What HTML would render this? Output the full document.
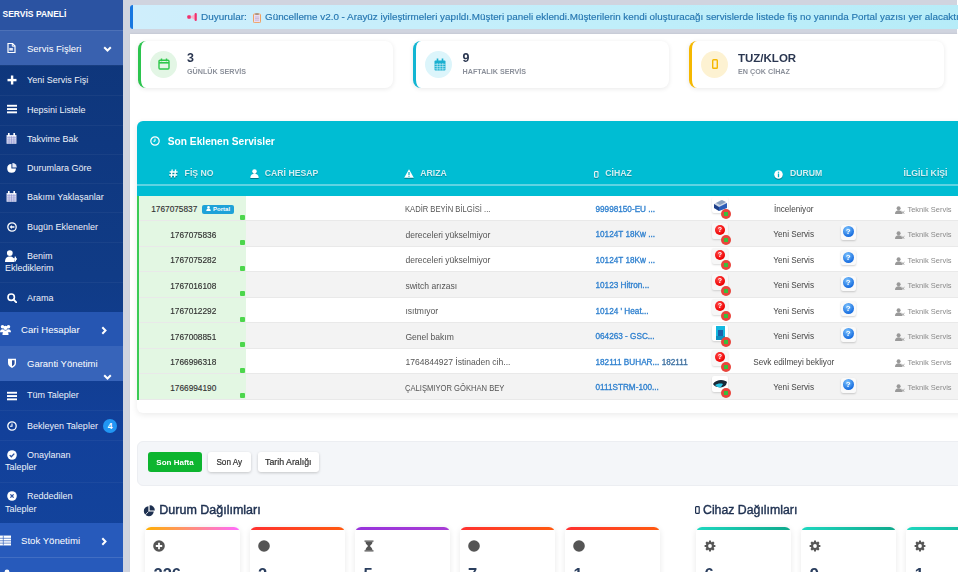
<!DOCTYPE html>
<html><head><meta charset="utf-8">
<style>
*{box-sizing:border-box}
html,body{margin:0;padding:0}
body{width:958px;height:572px;overflow:hidden;position:relative;background:#fff;font-family:"Liberation Sans",sans-serif}
.abs{position:absolute}
#sb{position:absolute;left:0;top:0;width:123.2px;height:572px;background:linear-gradient(180deg,#0e3578 0%,#0f3880 25%,#103b86 48%,#12409a 75%,#13449c 100%);color:#fff;overflow:hidden}
.sh{position:absolute;left:0;width:123.2px}
.si{position:absolute;left:0;width:123.2px;border-top:1px solid rgba(255,255,255,0.045)}
.si .ic{position:absolute;left:6px;width:11px;height:11px}
.si .tx{position:absolute;margin-top:-1px;left:27px;font-size:9px;line-height:12px;color:#eef2fa;white-space:nowrap}
.tx2{position:absolute;margin-top:-1px;left:5px;font-size:9px;line-height:12.8px;color:#eef2fa;white-space:nowrap}
.main{position:absolute;left:123.2px;top:0;width:834px;height:34px;background:#d0d4df}
.strip{position:absolute;left:123.2px;top:0;width:6.8px;height:572px;background:#d0d4df}

.alert{position:absolute;left:130px;top:4.9px;width:840px;height:24.5px;background:linear-gradient(90deg,#cfeefc,#bfeefa 60%,#b6ecf8);border-left:3px solid #1877e0;border-radius:3px 0 0 3px}
.alert .t{position:absolute;left:51px;top:5.5px;font-size:9.93px;line-height:13px;color:#2576b0;white-space:nowrap;-webkit-text-stroke:0.15px #2576b0}
.content{position:absolute;left:130px;top:33.5px;width:828px;height:539px;background:#fff;box-shadow:0 -1.5px 1.5px rgba(0,0,0,0.06)}
.sc{position:absolute;top:41px;height:46.5px;width:255.5px;background:#fff;border-left:3px solid #27c24c;border-radius:8px;box-shadow:0 1px 5px rgba(0,0,0,0.09)}
.sc .circ{position:absolute;top:9.5px;width:27px;height:27px;border-radius:50%}
.sc .num{position:absolute;left:46.5px;top:10px;font-size:12.5px;line-height:14px;font-weight:bold;color:#2a3650}
.sc .lab{position:absolute;left:46.5px;top:25.6px;font-size:7.2px;line-height:9px;font-weight:bold;color:#8c919b;letter-spacing:0;white-space:nowrap}
.tcard{position:absolute;left:137.2px;top:121.2px;width:840px;height:292.1px;background:#fff;border-radius:6px 0 0 6px;box-shadow:0 2px 6px rgba(0,0,0,0.08);overflow:hidden}
.thead{position:absolute;left:0;top:0;width:100%;height:74.4px;background:#00bdd3}
.ttl{position:absolute;left:30.6px;top:13.7px;font-size:10.2px;line-height:14px;font-weight:bold;color:#fff;white-space:nowrap}
.th{position:absolute;top:47px;font-size:8.7px;line-height:10px;font-weight:bold;color:#d3eff3;letter-spacing:0;white-space:nowrap;text-shadow:0 1px 1px rgba(0,0,0,0.25)}
.hline{position:absolute;left:0;top:62.9px;width:100%;height:1.5px;background:#5fd3e2}
.row{position:absolute;left:0;width:100%;height:25.5px;border-bottom:1px solid #e9e9e9}
.row.g{background:#f3f3f3}
.c1{position:absolute;left:2.1px;top:0;width:107.2px;height:100%;background:#e3f7e3}
.gb{position:absolute;left:0;top:0;width:2.2px;height:calc(100% + 1px);background:#3acb55}
.sq{position:absolute;left:100.8px;top:19.4px;width:5px;height:5px;background:#4cd64c;border-radius:1px}
.fn{position:absolute;top:8.8px;font-size:8.3px;line-height:10px;color:#333;-webkit-text-stroke:0.15px #333;white-space:nowrap}
.ar{position:absolute;left:268.2px;top:9.3px;font-size:7.6px;line-height:10px;color:#555;white-space:nowrap}
.cz{position:absolute;left:458.3px;top:9.1px;font-size:8.2px;line-height:10px;color:#2f80cf;-webkit-text-stroke:0.3px #2f80cf;white-space:nowrap}
.du{position:absolute;left:606.5px;width:100px;text-align:center;top:9.1px;font-size:8.2px;line-height:10px;color:#444;white-space:nowrap}
.ks{position:absolute;left:770.2px;top:9.3px;font-size:7.5px;line-height:10px;color:#8b8b8b;white-space:nowrap}
.thumb{position:absolute;left:575.3px;top:1.8px;width:16px;height:16px;border-radius:2px;background:#f7f7f7;box-shadow:0 1px 2px rgba(0,0,0,0.15);overflow:hidden}
.rb{position:absolute;left:584.2px;top:13.5px;width:10px;height:10px;border-radius:50%;background:#e8453c}
.rb:after{content:"";position:absolute;left:3px;top:3px;width:4px;height:4px;background:#3cbd3c}
.qb{position:absolute;left:703.5px;top:3.5px;width:15px;height:15px;background:#fafafa;border-radius:2px;box-shadow:0 1px 2px rgba(0,0,0,0.18)}
.qb i{position:absolute;left:2px;top:1.5px;width:11px;height:11px;border-radius:50%;background:radial-gradient(circle at 40% 30%,#7cc4ff,#1a6fe0 70%);color:#fff;font-style:normal;font-size:8px;line-height:11px;text-align:center;font-weight:bold}
.filt{position:absolute;left:136.5px;top:440.8px;width:840px;height:45px;background:#f4f6f9;border:1px solid #eceef2;border-radius:6px}
.btn{position:absolute;top:451.6px;height:20.2px;border-radius:3px;font-size:8px;line-height:21px;text-align:center;white-space:nowrap}
.h2{position:absolute;font-size:12.5px;line-height:15px;color:#1e3050;white-space:nowrap}
.mc{position:absolute;top:527px;width:95px;height:60px;background:#fff;border-radius:6px 6px 0 0;box-shadow:0 1px 6px rgba(0,0,0,0.09);overflow:hidden}
.mc .bar{position:absolute;left:0;top:0;width:100%;height:3px}
.mc .n{position:absolute;left:8.5px;top:36.5px;font-size:16.5px;line-height:20px;font-weight:bold;color:#2a3e5e}
.rq{position:absolute;left:2.5px;top:2px;width:10px;height:10px;border-radius:50%;background:radial-gradient(circle at 40% 35%,#ff4a4a,#e00 70%);color:#fff;font-size:7px;line-height:10px;text-align:center;font-weight:bold}

</style></head>
<body>
<div id="wrap" style="position:absolute;left:0;top:0;width:958px;height:572px;overflow:hidden;filter:blur(0.3px)">
<div id="sb">
  <div class="sh" style="top:0;height:29.5px;background:#2b53a2">
    <div class="abs" style="left:2.5px;top:8px;font-size:8.5px;line-height:12px;font-weight:bold;color:#fff">SERVİS PANELİ</div>
  </div>
  <div class="sh" style="top:29.5px;height:35.5px;background:#3961af;border-top:1px solid rgba(255,255,255,0.1)">
    <div class="abs" style="left:27px;top:11px;font-size:9.5px;line-height:13px;color:#fff">Servis Fişleri</div>
  </div>
  <div class="si" style="top:65px;height:30px"><div class="tx" style="top:9px">Yeni Servis Fişi</div></div>
  <div class="si" style="top:95px;height:29.5px"><div class="tx" style="top:8.5px">Hepsini Listele</div></div>
  <div class="si" style="top:124.5px;height:29px"><div class="tx" style="top:8px">Takvime Bak</div></div>
  <div class="si" style="top:153.5px;height:29px"><div class="tx" style="top:8.5px">Durumlara Göre</div></div>
  <div class="si" style="top:182.5px;height:29.5px"><div class="tx" style="top:8.5px">Bakımı Yaklaşanlar</div></div>
  <div class="si" style="top:212px;height:29.5px"><div class="tx" style="top:8.5px">Bugün Eklenenler</div></div>
  <div class="si" style="top:241.5px;height:40px"><div class="tx" style="top:8.5px">Benim</div><div class="tx2" style="top:20.5px">Eklediklerim</div></div>
  <div class="si" style="top:281.5px;height:30.5px"><div class="tx" style="top:10px">Arama</div></div>
  <div class="sh" style="top:312px;height:33.5px;background:#2656b2">
    <div class="abs" style="left:21px;top:11px;font-size:9.6px;line-height:13px;color:#fff">Cari Hesaplar</div>
  </div>
  <div class="sh" style="top:345.5px;height:35.5px;background:#3764ba">
    <div class="abs" style="left:27px;top:11px;font-size:9.5px;line-height:13px;color:#fff">Garanti Yönetimi</div>
  </div>
  <div class="si" style="top:381px;height:29px;border-top:none"><div class="tx" style="top:9px">Tüm Talepler</div></div>
  <div class="si" style="top:410px;height:30px"><div class="tx" style="top:9.5px">Bekleyen Talepler</div></div>
  <div class="si" style="top:440px;height:42px"><div class="tx" style="top:8.5px">Onaylanan</div><div class="tx2" style="top:21px">Talepler</div></div>
  <div class="si" style="top:482px;height:41px"><div class="tx" style="top:8px">Reddedilen</div><div class="tx2" style="top:21px">Talepler</div></div>
  <div class="sh" style="top:523px;height:34px;background:#275abb">
    <div class="abs" style="left:21px;top:11px;font-size:9.6px;line-height:13px;color:#fff">Stok Yönetimi</div>
  </div>
  <div class="sh" style="top:557px;height:30px;background:#275abb;border-top:1px solid rgba(255,255,255,0.12)">
    <div class="abs" style="left:21px;top:12px;font-size:9.6px;line-height:13px;color:#fff">Personel İşlemleri</div>
  </div>
  <svg width="10" height="10" viewBox="0 0 10 10" style="position:absolute;left:6px;top:42.5px"><path d="M2 0.5h4.5l2.5 2.5v6.5h-7z" fill="none" stroke="#fff" stroke-width="1.2"/><path d="M6.3 0.6v2.6h2.6" fill="none" stroke="#fff" stroke-width="1"/><rect x="3.3" y="5" width="3.6" height="2.6" fill="#dfe6f6"/></svg>
  <svg width="10" height="10" viewBox="0 0 10 10" style="position:absolute;left:6.5px;top:75px"><rect x="3.9" y="0.5" width="2.4" height="9" fill="#fff"/><rect x="0.5" y="3.9" width="9" height="2.4" fill="#fff"/></svg>
  <svg width="10" height="10" viewBox="0 0 10 10" style="position:absolute;left:6.5px;top:104px"><rect x="0" y="0.8" width="10" height="1.9" fill="#fff"/><rect x="0" y="4.1" width="10" height="1.9" fill="#fff"/><rect x="0" y="7.4" width="10" height="1.9" fill="#fff"/></svg>
  <svg width="11" height="11" viewBox="0 0 10 10" style="position:absolute;left:6px;top:132.5px"><rect x="0.5" y="1.8" width="9" height="8" fill="#dfe3f3"/><rect x="1.8" y="0" width="1.5" height="2.8" fill="#fff"/><rect x="6.7" y="0" width="1.5" height="2.8" fill="#fff"/><path d="M0.5 4.3h9M0.5 6.3h9M0.5 8.2h9M2.8 3v7M5 3v7M7.2 3v7" stroke="#8d8fd0" stroke-width="0.55"/></svg>
  <svg width="10" height="10" viewBox="0 0 10 10" style="position:absolute;left:6.5px;top:162.5px"><path d="M4.4 1A4.4 4.4 0 1 0 9 5.6H4.4z" fill="#fff"/><path d="M5.4 0A4.4 4.4 0 0 1 9.8 4.5H5.4z" fill="#e6eaf7"/></svg>
  <svg width="11" height="11" viewBox="0 0 10 10" style="position:absolute;left:6px;top:190.5px"><rect x="0.5" y="1.8" width="9" height="8" fill="#dfe3f3"/><rect x="1.8" y="0" width="1.5" height="2.8" fill="#fff"/><rect x="6.7" y="0" width="1.5" height="2.8" fill="#fff"/><path d="M0.5 4.3h9M0.5 6.3h9M0.5 8.2h9M2.8 3v7M5 3v7M7.2 3v7" stroke="#8d8fd0" stroke-width="0.55"/></svg>
  <svg width="10" height="10" viewBox="0 0 10 10" style="position:absolute;left:6.5px;top:221.5px"><circle cx="5" cy="5" r="4.2" fill="none" stroke="#fff" stroke-width="1.3"/><path d="M2.6 5l2.2-2v1.3h2.6v1.4H4.8V7z" fill="#fff"/></svg>
  <svg width="12" height="12" viewBox="0 0 10 10" style="position:absolute;left:4.5px;top:249.5px"><circle cx="4" cy="2.6" r="2.4" fill="#fff"/><path d="M0 10c0-3.2 1.6-4.6 4-4.6s4 1.4 4 4.6z" fill="#fff"/><rect x="8" y="5.5" width="1.2" height="4" fill="#fff"/><rect x="6.6" y="6.9" width="4" height="1.2" fill="#fff"/></svg>
  <svg width="10" height="10" viewBox="0 0 10 10" style="position:absolute;left:7px;top:293px"><circle cx="4.2" cy="4.2" r="3.2" fill="none" stroke="#fff" stroke-width="1.6"/><path d="M6.6 6.6L9.4 9.4" stroke="#fff" stroke-width="1.9" stroke-linecap="round"/></svg>
  <svg width="11" height="11" viewBox="0 0 10 10" style="position:absolute;left:0px;top:323.5px"><circle cx="2.3" cy="2.4" r="1.6" fill="#fff"/><circle cx="7.7" cy="2.4" r="1.6" fill="#fff"/><circle cx="5" cy="3.6" r="1.9" fill="#fff"/><path d="M0 7.5c0-2 1-2.8 2.3-2.8s2.3.8 2.3 2.8zM5.4 7.5c0-2 1-2.8 2.3-2.8S10 5.5 10 7.5z" fill="#fff"/><path d="M2.2 10c0-2.8 1.2-4.2 2.8-4.2s2.8 1.4 2.8 4.2z" fill="#fff"/></svg>
  <svg width="10" height="10" viewBox="0 0 10 10" style="position:absolute;left:6.5px;top:358px"><path d="M1 0.8h8v4.2c0 2.6-1.8 4-4 4.9C2.8 9 1 7.6 1 5z" fill="#fff"/><path d="M5 2.2h2.6v2.9c0 1.5-1 2.5-2.6 3.2z" fill="#2a4f9d"/></svg>
  <svg width="10" height="10" viewBox="0 0 10 10" style="position:absolute;left:7px;top:391px"><rect x="0" y="0.8" width="10" height="1.9" fill="#fff"/><rect x="0" y="4.1" width="10" height="1.9" fill="#fff"/><rect x="0" y="7.4" width="10" height="1.9" fill="#fff"/></svg>
  <svg width="10" height="10" viewBox="0 0 10 10" style="position:absolute;left:7px;top:420.5px"><circle cx="5" cy="5" r="4.2" fill="none" stroke="#fff" stroke-width="1.3"/><path d="M5 2.4V5.3H3" fill="none" stroke="#fff" stroke-width="1.1"/></svg>
  <svg width="10" height="10" viewBox="0 0 10 10" style="position:absolute;left:6.6px;top:450px"><circle cx="5" cy="5" r="4.8" fill="#fff"/><path d="M2.7 5.1l1.6 1.6 3-3.1" fill="none" stroke="#2a4f9d" stroke-width="1.3"/></svg>
  <svg width="10" height="10" viewBox="0 0 10 10" style="position:absolute;left:6.6px;top:491px"><circle cx="5" cy="5" r="4.8" fill="#fff"/><path d="M3.4 3.4l3.2 3.2M6.6 3.4L3.4 6.6" stroke="#2a4f9d" stroke-width="1.3"/></svg>
  <svg width="11" height="11" viewBox="0 0 10 10" style="position:absolute;left:0px;top:534.5px"><rect x="0" y="0.5" width="10" height="9" fill="#fff"/><path d="M0 3h10M0 5.2h10M0 7.4h10M3 0.5v9" stroke="#2b5bbb" stroke-width="0.6"/></svg>
  <svg width="10" height="10" viewBox="0 0 10 10" style="position:absolute;left:2px;top:569px"><circle cx="5" cy="2.8" r="2.4" fill="#fff"/><path d="M0.8 10c0-3.2 1.8-4.8 4.2-4.8s4.2 1.6 4.2 4.8z" fill="#fff"/></svg>
  <svg width="9" height="6" viewBox="0 0 9 6" style="position:absolute;left:103px;top:45.5px"><path d="M1.2 1.3l3.3 3.2 3.3-3.2" fill="none" stroke="#fff" stroke-width="2"/></svg>
  <svg width="6" height="9" viewBox="0 0 6 9" style="position:absolute;left:100.5px;top:325.5px"><path d="M1.3 1.2l3.2 3.3-3.2 3.3" fill="none" stroke="#fff" stroke-width="2"/></svg>
  <svg width="9" height="6" viewBox="0 0 9 6" style="position:absolute;left:103px;top:374px"><path d="M1.2 1.3l3.3 3.2 3.3-3.2" fill="none" stroke="#fff" stroke-width="2"/></svg>
  <svg width="6" height="9" viewBox="0 0 6 9" style="position:absolute;left:100.5px;top:536.5px"><path d="M1.3 1.2l3.2 3.3-3.2 3.3" fill="none" stroke="#fff" stroke-width="2"/></svg>
  <div class="abs" style="left:103px;top:418.8px;width:14px;height:14px;border-radius:50%;background:#2196f3;color:#fff;font-size:8.5px;line-height:14px;text-align:center;font-weight:bold">4</div>
</div>
<div class="main"></div>
<div class="strip"></div>

<div class="content"></div>
<div class="alert"><div class="t" style="left:68px">Duyurular:</div><div class="t" style="left:132px;font-size:9.85px">Güncelleme v2.0 - Arayüz iyileştirmeleri yapıldı.Müşteri paneli eklendi.Müşterilerin kendi oluşturacağı servislerde listede fiş no yanında Portal yazısı yer alacaktır.</div>
<svg width="10" height="8" viewBox="0 0 10 8" style="position:absolute;left:54px;top:8.2px"><rect x="0.3" y="2.2" width="3.6" height="3.6" rx="1" fill="#f0306e"/><path d="M3.8 3.2L8 1.2v5.6L3.8 4.8z" fill="#f7b6cc"/><rect x="7.6" y="0" width="2.2" height="8" rx="1" fill="#f0306e"/></svg>
<svg width="8" height="10" viewBox="0 0 8 10" style="position:absolute;left:119.8px;top:7.7px"><rect x="0.5" y="1" width="7" height="8.6" rx="0.8" fill="#e9ddf0" stroke="#f0a060" stroke-width="1"/><rect x="2.3" y="0.2" width="3.4" height="1.8" fill="#a89080"/><path d="M2 4h4M2 5.6h4M2 7.2h4" stroke="#b8a0c8" stroke-width="0.6"/></svg></div>

<div class="sc" style="left:137.5px;border-left-color:#2bc44e"><div class="circ" style="left:9.2px;background:#e3f6e5"></div><svg width="12" height="12" viewBox="0 0 12 12" style="position:absolute;left:17.7px;top:17px"><rect x="1" y="2.2" width="10" height="8.8" rx="1" fill="none" stroke="#2ec84a" stroke-width="1.4"/><path d="M1 4.8h10" stroke="#2ec84a" stroke-width="1.6"/><path d="M3.5 0.6v2.6M8.5 0.6v2.6" stroke="#2ec84a" stroke-width="1.4"/></svg><div class="num">3</div><div class="lab">GÜNLÜK SERVİS</div></div>
<div class="sc" style="left:413px;border-left-color:#12b5d2"><div class="circ" style="left:9.2px;background:#dcf5fb"></div><svg width="12" height="13" viewBox="0 0 12 13" style="position:absolute;left:17.7px;top:17px"><rect x="0.5" y="2.5" width="11" height="10" rx="1" fill="#1ab0d0"/><path d="M3.5 0.5v3M8.5 0.5v3" stroke="#1ab0d0" stroke-width="1.6"/><path d="M0.5 6.3h11M0.5 8.6h11M0.5 10.8h11M3.2 5v7.5M6 5v7.5M8.8 5v7.5" stroke="#dcf5fb" stroke-width="0.6"/></svg><div class="num">9</div><div class="lab">HAFTALIK SERVİS</div></div>
<div class="sc" style="left:688.5px;border-left-color:#f5b800"><div class="circ" style="left:9.2px;background:#fdf2d2"></div><svg width="6" height="10" viewBox="0 0 6 10" style="position:absolute;left:20.7px;top:18px"><rect x="0.7" y="0.7" width="4.6" height="8.6" rx="0.8" fill="none" stroke="#f5b800" stroke-width="1.4"/></svg><div class="num" style="font-size:11.5px">TUZ/KLOR</div><div class="lab">EN ÇOK CİHAZ</div></div>

<div class="tcard">
 <div class="thead">
  <div class="ttl">Son Eklenen Servisler</div>
  <div class="th" style="left:47.4px">FİŞ NO</div>
  <div class="th" style="left:127.6px">CARİ HESAP</div>
  <div class="th" style="left:283px">ARIZA</div>
  <div class="th" style="left:468px">CİHAZ</div>
  <div class="th" style="left:652.8px">DURUM</div>
  <div class="th" style="left:766.4px">İLGİLİ KİŞİ</div>
  <div class="hline"></div>
  <svg width="10" height="10" viewBox="0 0 10 10" style="position:absolute;left:13px;top:14.9px"><circle cx="5" cy="5" r="4.2" fill="none" stroke="#fff" stroke-width="1.2"/><path d="M5 2.6V5.2H3.4" fill="none" stroke="#fff" stroke-width="1"/></svg>
  <svg width="9" height="9" viewBox="0 0 9 9" style="position:absolute;left:32px;top:47.7px;filter:drop-shadow(0 1px 0.6px rgba(0,0,0,.35))"><path d="M3.2 0.5L2.2 8.5M6.6 0.5L5.6 8.5M0.6 3h8M0.2 6h8" stroke="#fff" stroke-width="1.4"/></svg>
  <svg width="9" height="9" viewBox="0 0 9 9" style="position:absolute;left:112.4px;top:47.7px;filter:drop-shadow(0 1px 0.6px rgba(0,0,0,.35))"><circle cx="4.5" cy="2.6" r="2.3" fill="#fff"/><path d="M0.3 9c0-2.8 1.7-4.2 4.2-4.2S8.7 6.2 8.7 9z" fill="#fff"/></svg>
  <svg width="10" height="9" viewBox="0 0 10 9" style="position:absolute;left:266.8px;top:47.7px;filter:drop-shadow(0 1px 0.6px rgba(0,0,0,.35))"><path d="M5 0.3L9.8 8.8H0.2z" fill="#fff"/><path d="M5 3v3M5 6.8v1" stroke="#00a9bf" stroke-width="1.2"/></svg>
  <svg width="5" height="7" viewBox="0 0 5 7" style="position:absolute;left:457.3px;top:49.6px;filter:drop-shadow(0 1px 0.6px rgba(0,0,0,.3))"><rect x="0.6" y="0.6" width="3.4" height="5.6" rx="0.6" fill="none" stroke="#e8f8fa" stroke-width="1.1"/></svg>
  <svg width="9" height="9" viewBox="0 0 9 9" style="position:absolute;left:637.3px;top:48.4px;filter:drop-shadow(0 1px 0.6px rgba(0,0,0,.35))"><circle cx="4.5" cy="4.5" r="4.3" fill="#fff"/><path d="M4.5 3.6v3.6M4.5 1.8v1" stroke="#00a9bf" stroke-width="1.3"/></svg>
 </div>
 <div class="row" style="top:74.4px"><div class="c1"><div class="sq"></div></div><div class="gb"></div><div class="fn" style="left:14px">1767075837</div><div class="abs" style="left:65.2px;top:9px;width:31.8px;height:9px;background:#1ea2d8;border-radius:2px;color:#fff;font-size:6px;line-height:9px;text-align:center;font-weight:bold"><svg width="5" height="5" viewBox="0 0 10 10" style="vertical-align:0"><circle cx="5" cy="2.8" r="2.6" fill="#fff"/><path d="M0.5 10c0-3.4 2-5 4.5-5s4.5 1.6 4.5 5z" fill="#fff"/></svg> Portal</div><div class="ar" style="font-size:8.8px;top:8.6px;transform:scaleX(0.865);transform-origin:0 0">KADİR BEYİN BİLGİSİ ...</div><div class="cz">99998150-EU ...<span style="font-weight:normal;color:#555"></span></div><div class="thumb" style="background:#fff"><svg width="16" height="16" viewBox="0 0 16 16" style="position:absolute;left:0;top:0"><path d="M2 7l7-4 6 3-1 5-7 3-5-3z" fill="#cfd8e6"/><path d="M2 7l5 3v4l-5-3z" fill="#1d3f8a"/><path d="M7 10l8-4v5l-8 3z" fill="#2c5cb8"/><path d="M4 6l6-3 4 2-6 3z" fill="#8aa0c0"/></svg></div><div class="rb"></div><div class="du">İnceleniyor</div><svg width="10" height="8" viewBox="0 0 10 8" style="position:absolute;left:757.5px;top:10.3px"><circle cx="3.6" cy="2.2" r="2" fill="#999"/><path d="M0 8c0-2.6 1.4-3.8 3.6-3.8S7.2 5.4 7.2 8z" fill="#999"/><path d="M6.5 5.2l3 2.6M9.5 5.2l-3 2.6" stroke="#999" stroke-width="0.9"/></svg><div class="ks">Teknik Servis</div></div>
<div class="row g" style="top:99.9px"><div class="c1"><div class="sq"></div></div><div class="gb"></div><div class="fn" style="left:33px">1767075836</div><div class="ar" style="font-size:8.55px;top:8.8px">dereceleri yükselmiyor</div><div class="cz">10124T 18Kw ...<span style="font-weight:normal;color:#555"></span></div><div class="thumb"><div class="rq">?</div></div><div class="rb"></div><div class="du">Yeni Servis</div><div class="qb"><i>?</i></div><svg width="10" height="8" viewBox="0 0 10 8" style="position:absolute;left:757.5px;top:10.3px"><circle cx="3.6" cy="2.2" r="2" fill="#999"/><path d="M0 8c0-2.6 1.4-3.8 3.6-3.8S7.2 5.4 7.2 8z" fill="#999"/><path d="M6.5 5.2l3 2.6M9.5 5.2l-3 2.6" stroke="#999" stroke-width="0.9"/></svg><div class="ks">Teknik Servis</div></div>
<div class="row" style="top:125.4px"><div class="c1"><div class="sq"></div></div><div class="gb"></div><div class="fn" style="left:33px">1767075282</div><div class="ar" style="font-size:8.55px;top:8.8px">dereceleri yükselmiyor</div><div class="cz">10124T 18Kw ...<span style="font-weight:normal;color:#555"></span></div><div class="thumb"><div class="rq">?</div></div><div class="rb"></div><div class="du">Yeni Servis</div><div class="qb"><i>?</i></div><svg width="10" height="8" viewBox="0 0 10 8" style="position:absolute;left:757.5px;top:10.3px"><circle cx="3.6" cy="2.2" r="2" fill="#999"/><path d="M0 8c0-2.6 1.4-3.8 3.6-3.8S7.2 5.4 7.2 8z" fill="#999"/><path d="M6.5 5.2l3 2.6M9.5 5.2l-3 2.6" stroke="#999" stroke-width="0.9"/></svg><div class="ks">Teknik Servis</div></div>
<div class="row g" style="top:150.9px"><div class="c1"><div class="sq"></div></div><div class="gb"></div><div class="fn" style="left:33px">1767016108</div><div class="ar" style="font-size:8.55px;top:8.8px">switch arızası</div><div class="cz">10123 Hitron...<span style="font-weight:normal;color:#555"></span></div><div class="thumb"><div class="rq">?</div></div><div class="rb"></div><div class="du">Yeni Servis</div><div class="qb"><i>?</i></div><svg width="10" height="8" viewBox="0 0 10 8" style="position:absolute;left:757.5px;top:10.3px"><circle cx="3.6" cy="2.2" r="2" fill="#999"/><path d="M0 8c0-2.6 1.4-3.8 3.6-3.8S7.2 5.4 7.2 8z" fill="#999"/><path d="M6.5 5.2l3 2.6M9.5 5.2l-3 2.6" stroke="#999" stroke-width="0.9"/></svg><div class="ks">Teknik Servis</div></div>
<div class="row" style="top:176.4px"><div class="c1"><div class="sq"></div></div><div class="gb"></div><div class="fn" style="left:33px">1767012292</div><div class="ar" style="font-size:8.55px;top:8.8px">ısıtmıyor</div><div class="cz">10124 ' Heat...<span style="font-weight:normal;color:#555"></span></div><div class="thumb"><div class="rq">?</div></div><div class="rb"></div><div class="du">Yeni Servis</div><div class="qb"><i>?</i></div><svg width="10" height="8" viewBox="0 0 10 8" style="position:absolute;left:757.5px;top:10.3px"><circle cx="3.6" cy="2.2" r="2" fill="#999"/><path d="M0 8c0-2.6 1.4-3.8 3.6-3.8S7.2 5.4 7.2 8z" fill="#999"/><path d="M6.5 5.2l3 2.6M9.5 5.2l-3 2.6" stroke="#999" stroke-width="0.9"/></svg><div class="ks">Teknik Servis</div></div>
<div class="row g" style="top:201.9px"><div class="c1"><div class="sq"></div></div><div class="gb"></div><div class="fn" style="left:33px">1767008851</div><div class="ar" style="font-size:8.55px;top:8.8px">Genel bakım</div><div class="cz">064263 - GSC...<span style="font-weight:normal;color:#555"></span></div><div class="thumb" style="background:#fff"><svg width="16" height="16" viewBox="0 0 16 16" style="position:absolute;left:0;top:0"><rect x="4" y="1" width="9" height="14" fill="#14b8e0"/><rect x="6" y="5" width="5" height="6" fill="#1d5fa8"/><rect x="4" y="11" width="9" height="4" fill="#0d8fc0"/></svg></div><div class="rb"></div><div class="du">Yeni Servis</div><div class="qb"><i>?</i></div><svg width="10" height="8" viewBox="0 0 10 8" style="position:absolute;left:757.5px;top:10.3px"><circle cx="3.6" cy="2.2" r="2" fill="#999"/><path d="M0 8c0-2.6 1.4-3.8 3.6-3.8S7.2 5.4 7.2 8z" fill="#999"/><path d="M6.5 5.2l3 2.6M9.5 5.2l-3 2.6" stroke="#999" stroke-width="0.9"/></svg><div class="ks">Teknik Servis</div></div>
<div class="row" style="top:227.4px"><div class="c1"><div class="sq"></div></div><div class="gb"></div><div class="fn" style="left:33px">1766996318</div><div class="ar" style="font-size:8.55px;top:8.8px">1764844927 İstinaden cih...</div><div class="cz">182111 BUHAR...<span style="font-weight:normal;color:#555"> 182111</span></div><div class="thumb"><div class="rq">?</div></div><div class="rb"></div><div class="du">Sevk edilmeyi bekliyor</div><svg width="10" height="8" viewBox="0 0 10 8" style="position:absolute;left:757.5px;top:10.3px"><circle cx="3.6" cy="2.2" r="2" fill="#999"/><path d="M0 8c0-2.6 1.4-3.8 3.6-3.8S7.2 5.4 7.2 8z" fill="#999"/><path d="M6.5 5.2l3 2.6M9.5 5.2l-3 2.6" stroke="#999" stroke-width="0.9"/></svg><div class="ks">Teknik Servis</div></div>
<div class="row g" style="top:252.9px"><div class="c1"><div class="sq"></div></div><div class="gb"></div><div class="fn" style="left:33px">1766994190</div><div class="ar" style="font-size:8.8px;top:8.6px;transform:scaleX(0.865);transform-origin:0 0">ÇALIŞMIYOR GÖKHAN BEY</div><div class="cz">0111STRM-100...<span style="font-weight:normal;color:#555"></span></div><div class="thumb" style="background:#fff"><svg width="16" height="16" viewBox="0 0 16 16" style="position:absolute;left:0;top:0"><path d="M1 8c2-3 5-4 8-4s5 1 6 2l-1 3c-2 2-5 3-8 2-2 0-4-1-5-3z" fill="#1a2a38"/><path d="M3 9c2-1 5-2 8-1l-2 3c-2 1-4 0-6-2z" fill="#2bc6e6"/></svg></div><div class="rb"></div><div class="du">Yeni Servis</div><div class="qb"><i>?</i></div><svg width="10" height="8" viewBox="0 0 10 8" style="position:absolute;left:757.5px;top:10.3px"><circle cx="3.6" cy="2.2" r="2" fill="#999"/><path d="M0 8c0-2.6 1.4-3.8 3.6-3.8S7.2 5.4 7.2 8z" fill="#999"/><path d="M6.5 5.2l3 2.6M9.5 5.2l-3 2.6" stroke="#999" stroke-width="0.9"/></svg><div class="ks">Teknik Servis</div></div>
</div>

<div class="filt"></div>
<div class="btn" style="left:148px;width:54px;background:#0db52f;color:#fff;font-weight:bold">Son Hafta</div>
<div class="btn" style="left:208px;width:42.6px;background:#fff;color:#333;box-shadow:0 1px 3px rgba(0,0,0,0.2);font-size:8.2px;-webkit-text-stroke:0.2px #333">Son Ay</div>
<div class="btn" style="left:257.5px;width:61.5px;background:#fff;color:#333;box-shadow:0 1px 3px rgba(0,0,0,0.2);font-size:8.8px;-webkit-text-stroke:0.2px #333">Tarih Aralığı</div>

<div class="h2" style="left:159.3px;top:503px;-webkit-text-stroke:0.45px #1e3050">Durum Dağılımları</div>
<svg width="12" height="12" viewBox="0 0 12 12" style="position:absolute;left:143.3px;top:504.5px"><path d="M5.4 1.2A5 5 0 1 0 10.8 6.6H5.4z" fill="#1e3050"/><path d="M6.6 0.2A5 5 0 0 1 11.8 5.4H6.6z" fill="#1e3050"/><path d="M5.4 6.6L2.2 10" stroke="#fff" stroke-width="0.8"/></svg>
<div class="h2" style="left:703px;top:502.8px;font-size:12.3px;-webkit-text-stroke:0.4px #1e3050">Cihaz Dağılımları</div>
<svg width="5" height="8" viewBox="0 0 5 8" style="position:absolute;left:695.2px;top:506px"><rect x="0.6" y="0.6" width="3.6" height="6.8" rx="0.7" fill="none" stroke="#1e3050" stroke-width="1.2"/></svg>

<div class="mc" style="left:145px"><div class="bar" style="background:linear-gradient(90deg,#ffb000,#ff6aff)"></div><svg width="12" height="12" viewBox="0 0 12 12" style="position:absolute;left:8px;top:12.7px"><circle cx="6" cy="6" r="5.8" fill="#555"/><path d="M6 2.8v6.4M2.8 6h6.4" stroke="#fff" stroke-width="1.8"/></svg><div class="n">226</div></div>
<div class="mc" style="left:249.5px"><div class="bar" style="background:linear-gradient(90deg,#ff3030,#ff5a10)"></div><svg width="12" height="12" viewBox="0 0 12 12" style="position:absolute;left:8px;top:12.7px"><circle cx="6" cy="6" r="5.8" fill="#555"/></svg><div class="n">2</div></div>
<div class="mc" style="left:355px"><div class="bar" style="background:linear-gradient(90deg,#9733dc,#a83cd4)"></div><svg width="12" height="12" viewBox="0 0 12 12" style="position:absolute;left:8px;top:12.7px"><path d="M1.5 0.5h9v1.2H1.5zM1.5 10.3h9v1.2H1.5z" fill="#555"/><path d="M2.5 1.7h7c0 2.6-2.2 3.6-2.8 4.3.6.7 2.8 1.7 2.8 4.3h-7c0-2.6 2.2-3.6 2.8-4.3C4.7 5.3 2.5 4.3 2.5 1.7z" fill="#555"/></svg><div class="n">5</div></div>
<div class="mc" style="left:459.5px"><div class="bar" style="background:linear-gradient(90deg,#ff3030,#ff5a10)"></div><svg width="12" height="12" viewBox="0 0 12 12" style="position:absolute;left:8px;top:12.7px"><circle cx="6" cy="6" r="5.8" fill="#555"/></svg><div class="n">7</div></div>
<div class="mc" style="left:565px"><div class="bar" style="background:linear-gradient(90deg,#ff3030,#ff5a10)"></div><svg width="12" height="12" viewBox="0 0 12 12" style="position:absolute;left:8px;top:12.7px"><circle cx="6" cy="6" r="5.8" fill="#555"/></svg><div class="n">1</div></div>
<div class="mc" style="left:696px"><div class="bar" style="background:linear-gradient(90deg,#1ed8c0,#0fa98c)"></div><svg width="12" height="12" viewBox="0 0 12 12" style="position:absolute;left:8px;top:12.7px"><g fill="#555"><circle cx="6" cy="6" r="4"/><rect x="4.9" y="0.6" width="2.2" height="10.8" rx="0.3"/><rect x="0.6" y="4.9" width="10.8" height="2.2" rx="0.3"/><rect x="4.9" y="0.6" width="2.2" height="10.8" rx="0.3" transform="rotate(45 6 6)"/><rect x="4.9" y="0.6" width="2.2" height="10.8" rx="0.3" transform="rotate(-45 6 6)"/></g><circle cx="6" cy="6" r="1.9" fill="#fff"/></svg><div class="n">6</div></div>
<div class="mc" style="left:801.3px"><div class="bar" style="background:linear-gradient(90deg,#1ed8c0,#0fa98c)"></div><svg width="12" height="12" viewBox="0 0 12 12" style="position:absolute;left:8px;top:12.7px"><g fill="#555"><circle cx="6" cy="6" r="4"/><rect x="4.9" y="0.6" width="2.2" height="10.8" rx="0.3"/><rect x="0.6" y="4.9" width="10.8" height="2.2" rx="0.3"/><rect x="4.9" y="0.6" width="2.2" height="10.8" rx="0.3" transform="rotate(45 6 6)"/><rect x="4.9" y="0.6" width="2.2" height="10.8" rx="0.3" transform="rotate(-45 6 6)"/></g><circle cx="6" cy="6" r="1.9" fill="#fff"/></svg><div class="n">9</div></div>
<div class="mc" style="left:906.3px"><div class="bar" style="background:linear-gradient(90deg,#1ed8c0,#0fa98c)"></div><svg width="12" height="12" viewBox="0 0 12 12" style="position:absolute;left:8px;top:12.7px"><g fill="#555"><circle cx="6" cy="6" r="4"/><rect x="4.9" y="0.6" width="2.2" height="10.8" rx="0.3"/><rect x="0.6" y="4.9" width="10.8" height="2.2" rx="0.3"/><rect x="4.9" y="0.6" width="2.2" height="10.8" rx="0.3" transform="rotate(45 6 6)"/><rect x="4.9" y="0.6" width="2.2" height="10.8" rx="0.3" transform="rotate(-45 6 6)"/></g><circle cx="6" cy="6" r="1.9" fill="#fff"/></svg><div class="n">1</div></div>
</div>
</body></html>
